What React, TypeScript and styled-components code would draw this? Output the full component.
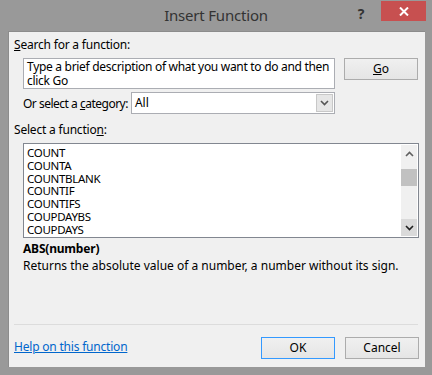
import React from "react";
import styled, { createGlobalStyle } from "styled-components";

const Global = createGlobalStyle`
  html, body { margin: 0; padding: 0; }
  body { width: 432px; height: 375px; overflow: hidden; background: #999999; }
  * { box-sizing: border-box; }
`;

const FONT = `"Noto Sans", "Open Sans", sans-serif`;

const Window = styled.div`
  width: 432px;
  height: 375px;
  background: #999999;
  display: flex;
  flex-direction: column;
  font-family: ${FONT};
  font-size: 12px;
  color: #000;
`;

const TitleBar = styled.div`
  height: 31px;
  display: grid;
  grid-template-columns: 1fr auto auto;
  align-items: start;
  position: relative;
`;

const Title = styled.div`
  position: absolute;
  left: 0;
  right: 0;
  top: 5px;
  text-align: center;
  font-size: 15px;
  color: #333333;
  letter-spacing: -0.2px;
`;

const Help = styled.div`
  grid-column: 2;
  margin-top: 4px;
  margin-right: 13px;
  font-size: 14px;
  font-weight: bold;
  color: #333;
  width: 14px;
  text-align: center;
`;

const Close = styled.div`
  grid-column: 3;
  margin-top: 1px;
  margin-right: 6px;
  width: 45px;
  height: 20px;
  background: #c75050;
  display: flex;
  align-items: center;
  justify-content: center;
`;

const Client = styled.div`
  margin: 0 7px 8px 8px;
  flex: 1;
  background: #f0f0f0;
  border-left: 1px solid #8c8c8c;
  border-top: 1px solid #8c8c8c;
  display: flex;
  flex-direction: column;
  padding: 5px 6px 0 5px;
`;

const Label = styled.div<{ $indent?: number }>`
  height: 16px;
  line-height: 16px;
  margin-left: ${(p) => p.$indent ?? 0}px;
  white-space: nowrap;
  letter-spacing: -0.2px;
`;

const U = styled.span`
  text-decoration: underline;
`;

const SearchRow = styled.div`
  display: flex;
  align-items: flex-start;
  margin-top: 5px;
  margin-left: 9px;
  gap: 9px;
`;

const SearchBox = styled.div`
  width: 312px;
  height: 31px;
  background: #fff;
  border: 1px solid #abadb3;
  padding: 1px 3px;
  line-height: 14px;
  letter-spacing: -0.3px;
  color: #000;
`;

const Button = styled.div<{ $default?: boolean }>`
  width: 74px;
  height: 22px;
  border: 1px solid ${(p) => (p.$default ? "#3399ff" : "#acacac")};
  background: linear-gradient(#f0f0f0, #e5e5e5);
  display: flex;
  align-items: center;
  justify-content: center;
  line-height: 1;
`;

const CategoryRow = styled.div`
  display: flex;
  align-items: center;
  margin-top: 3px;
  margin-left: 9px;
  width: 312px;
  gap: 3px;
`;

const CategoryLabel = styled.span`
  letter-spacing: -0.5px;
  white-space: nowrap;
`;

const Select = styled.div`
  flex: 1;
  height: 22px;
  background: #fff;
  border: 1px solid #abadb3;
  display: flex;
  align-items: stretch;
`;

const SelectValue = styled.div`
  flex: 1;
  padding-left: 3px;
  line-height: 19px;
`;

const DropBtn = styled.div`
  width: 17px;
  margin: 1px;
  background: #e6e6e6;
  border: 1px solid #c8c8c8;
  display: flex;
  align-items: center;
  justify-content: center;
`;

const ListLabel = styled(Label)`
  margin-top: 8px;
`;

const List = styled.div`
  margin-top: 5px;
  margin-left: 9px;
  width: 396px;
  height: 95px;
  background: #fff;
  border: 1px solid #828790;
  display: flex;
`;

const Items = styled.div`
  flex: 1;
  padding: 2px 3px;
`;

const Item = styled.div`
  height: 12.8px;
  line-height: 13px;
  font-size: 11.5px;
  letter-spacing: -0.3px;
  white-space: nowrap;
`;

const Scroll = styled.div`
  width: 16px;
  margin: 1px 1px 1px 0;
  background: #f0f0f0;
  display: flex;
  flex-direction: column;
`;

const ScrollBtn = styled.div<{ $shade?: boolean }>`
  height: 17px;
  background: ${(p) => (p.$shade ? "#dadada" : "#f0f0f0")};
  display: flex;
  align-items: center;
  justify-content: center;
`;

const Track = styled.div`
  flex: 1;
  padding-top: 7px;
`;

const Thumb = styled.div`
  height: 17px;
  background: #c1c1c1;
`;

const Syntax = styled.div`
  margin-top: 3px;
  margin-left: 9px;
  font-weight: bold;
  height: 16px;
  line-height: 16px;
  letter-spacing: -0.2px;
`;

const Desc = styled.div`
  margin-top: 1px;
  margin-left: 9px;
  height: 16px;
  line-height: 16px;
`;

const Spacer = styled.div`
  flex: 1;
`;

const Separator = styled.div`
  height: 1px;
  background: #dcdcdc;
  width: 404px;
`;

const Footer = styled.div`
  display: flex;
  align-items: center;
  margin-top: 12px;
  margin-bottom: 8px;
  gap: 10px;
`;

const Link = styled.a`
  color: #0066cc;
  text-decoration: underline;
  margin-right: auto;
  margin-top: -3px;
  letter-spacing: -0.2px;
`;

const Chevron = ({ up, color = "#404040" }: { up?: boolean; color?: string }) => (
  <svg width="9" height="6" viewBox="0 0 9 6">
    <path
      d={up ? "M1 5 L4.5 1.5 L8 5" : "M1 1 L4.5 4.5 L8 1"}
      fill="none"
      stroke={color}
      strokeWidth="1.6"
    />
  </svg>
);

const items = ["COUNT", "COUNTA", "COUNTBLANK", "COUNTIF", "COUNTIFS", "COUPDAYBS", "COUPDAYS"];

export default function App() {
  return (
    <Window>
      <Global />
      <TitleBar>
        <Title>Insert Function</Title>
        <Help>?</Help>
        <Close>
          <svg width="10" height="9" viewBox="0 0 10 9">
            <path d="M1 0.5 L9 8.5 M9 0.5 L1 8.5" stroke="#fff" strokeWidth="2" />
          </svg>
        </Close>
      </TitleBar>
      <Client>
        <Label>
          <U>S</U>earch for a function:
        </Label>
        <SearchRow>
          <SearchBox>
            Type a brief description of what you want to do and then click Go
          </SearchBox>
          <Button>
            <U>G</U>o
          </Button>
        </SearchRow>
        <CategoryRow>
          <CategoryLabel>
            Or select a <U>c</U>ategory:
          </CategoryLabel>
          <Select>
            <SelectValue>All</SelectValue>
            <DropBtn>
              <Chevron color="#555" />
            </DropBtn>
          </Select>
        </CategoryRow>
        <ListLabel>
          Select a functio<U>n</U>:
        </ListLabel>
        <List>
          <Items>
            {items.map((i) => (
              <Item key={i}>{i}</Item>
            ))}
          </Items>
          <Scroll>
            <ScrollBtn>
              <Chevron up color="#606060" />
            </ScrollBtn>
            <Track>
              <Thumb />
            </Track>
            <ScrollBtn $shade>
              <Chevron color="#202020" />
            </ScrollBtn>
          </Scroll>
        </List>
        <Syntax>ABS(number)</Syntax>
        <Desc>Returns the absolute value of a number, a number without its sign.</Desc>
        <Spacer />
        <Separator />
        <Footer>
          <Link href="#">Help on this function</Link>
          <Button $default>OK</Button>
          <Button>Cancel</Button>
        </Footer>
      </Client>
    </Window>
  );
}
